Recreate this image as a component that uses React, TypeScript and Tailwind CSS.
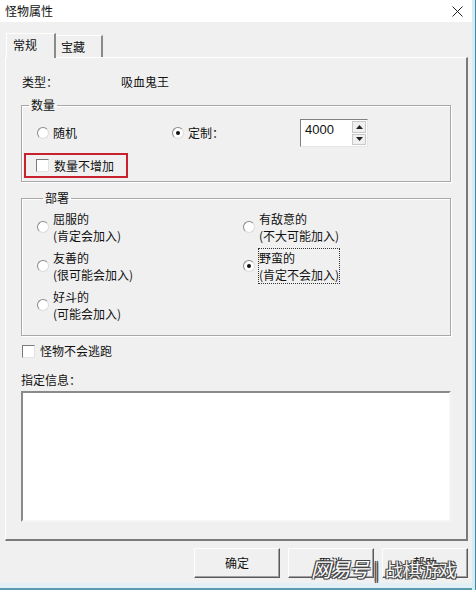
import React from 'react';

const Radio: React.FC<{ checked?: boolean }> = ({ checked }) => (
    <span className="w-[12px] h-[12px] shrink-0 rounded-full bg-white border border-t-[#8a8a8a] border-l-[#8a8a8a] border-r-[#dcdcdc] border-b-[#dcdcdc] flex items-center justify-center">
        {checked && <span className="w-[4px] h-[4px] rounded-full bg-[#111]" />}
    </span>
);

const Check: React.FC = () => (
    <span className="w-[13px] h-[13px] shrink-0 bg-white border border-t-[#7a7a7a] border-l-[#7a7a7a] border-r-[#e3e3e3] border-b-[#e3e3e3]" />
);

const Option: React.FC<{ title: string; sub: string; checked?: boolean; focus?: boolean }> = ({ title, sub, checked, focus }) => (
    <div className="flex items-center gap-[3px] h-[36px]">
        <Radio checked={checked} />
        <div className={`leading-[17px] border ${focus ? 'border-dotted border-[#333]' : 'border-transparent'}`}>
            <div>{title}</div>
            <div>{sub}</div>
        </div>
    </div>
);

const Button: React.FC<{ label: string }> = ({ label }) => (
    <button className="w-[86px] h-[30px] bg-[#f0f0f0] border border-t-[#fdfdfd] border-l-[#fdfdfd] border-r-[#5a5a5a] border-b-[#5a5a5a] shadow-[inset_-1px_-1px_0_#a0a0a0] text-[12px] text-[#111]">
        {label}
    </button>
);

const App: React.FC = () => {
    return (
        <div className="relative w-[476px] h-[590px] flex bg-[#f0f0f0] overflow-hidden font-['Noto_Sans_CJK_SC','Liberation_Sans',sans-serif] text-[12px] text-[#111]">
            <div className="w-[472px] h-full flex flex-col">
                {/* title bar */}
                <div className="h-[22px] bg-white flex items-center justify-between pl-[5px] pr-[9px]">
                    <span className="text-[12px]">怪物属性</span>
                    <svg width="11" height="11" viewBox="0 0 11 11">
                        <path d="M0.5 0.5 L10.5 10.5 M10.5 0.5 L0.5 10.5" stroke="#222" strokeWidth="1" />
                    </svg>
                </div>

                <div className="flex-1 flex flex-col">
                    {/* tabs */}
                    <div className="mt-[10px] ml-[6px] flex items-end h-[25px]">
                        <div className="relative z-10 h-[25px] -mb-[1px] w-[50px] bg-[#f0f0f0] border-t border-l border-t-white border-l-white border-r-2 border-r-[#8a8a8a] pl-[6px] pt-[2px]">
                            常规
                        </div>
                        <div className="h-[22px] w-[47px] border-t border-t-white border-r-2 border-r-[#8a8a8a] pl-[5px] pt-[2px]">
                            宝藏
                        </div>
                    </div>

                    {/* panel */}
                    <div className="ml-[5px] w-[463px] border-t border-l border-t-white border-l-white border-r-2 border-b-2 border-r-[#7a7a7a] border-b-[#7a7a7a] pl-[15px] pr-[15px] pt-[16px] pb-[17px]">
                        <div className="flex h-[16px] leading-[16px]">
                            <span className="ml-[1px] w-[99px]">类型：</span>
                            <span>吸血鬼王</span>
                        </div>

                        <fieldset className="mt-[7px] border border-[#a8a8a8] shadow-[inset_1px_1px_0_#fff,1px_1px_0_#fff] pb-[3px] pl-[1px]">
                            <legend className="ml-[6px] px-[2px] leading-[16px]">数量</legend>
                            <div className="mt-[6px] flex items-center h-[28px] pl-[14px]">
                                <div className="w-[135px] flex items-center gap-[4px]">
                                    <Radio />
                                    <span>随机</span>
                                </div>
                                <div className="w-[128px] flex items-center gap-[4px]">
                                    <Radio checked />
                                    <span>定制：</span>
                                </div>
                                <div className="flex h-[28px] w-[68px] bg-white border border-t-[#808080] border-l-[#808080] border-r-[#e6e6e6] border-b-[#e6e6e6]">
                                    <div className="flex-1 pl-[4px] pt-[2px] text-[13px] font-['Liberation_Sans',sans-serif] leading-[16px]">4000</div>
                                    <div className="w-[15px] flex flex-col gap-[1px] py-[1px] pr-[1px]">
                                        <div className="flex-1 bg-[#f0f0f0] border border-[#c8c8c8] flex items-center justify-center">
                                            <svg width="7" height="4" viewBox="0 0 7 4"><path d="M0 4 L3.5 0 L7 4 Z" fill="#222" /></svg>
                                        </div>
                                        <div className="flex-1 bg-[#f0f0f0] border border-[#c8c8c8] flex items-center justify-center">
                                            <svg width="7" height="4" viewBox="0 0 7 4"><path d="M0 0 L3.5 4 L7 0 Z" fill="#222" /></svg>
                                        </div>
                                    </div>
                                </div>
                            </div>
                            <div className="mt-[6px] ml-[1px] w-[104px] h-[25px] border-2 border-[#c8202e] flex items-center gap-[5px] pl-[10px]">
                                <Check />
                                <span>数量不增加</span>
                            </div>
                        </fieldset>

                        <fieldset className="mt-[8px] border border-[#a8a8a8] shadow-[inset_1px_1px_0_#fff,1px_1px_0_#fff] pt-[3px] pb-[12px] pl-[15px]">
                            <legend className="ml-[6px] px-[2px] leading-[16px]">部署</legend>
                            <div className="flex">
                                <div className="w-[206px] flex flex-col gap-[3px]">
                                    <Option title="屈服的" sub="(肯定会加入)" />
                                    <Option title="友善的" sub="(很可能会加入)" />
                                    <Option title="好斗的" sub="(可能会加入)" />
                                </div>
                                <div className="flex flex-col gap-[3px]">
                                    <Option title="有敌意的" sub="(不大可能加入)" />
                                    <Option title="野蛮的" sub="(肯定不会加入)" checked focus />
                                </div>
                            </div>
                        </fieldset>

                        <div className="mt-[7px] ml-[1px] flex items-center gap-[5px] h-[16px]">
                            <Check />
                            <span>怪物不会逃跑</span>
                        </div>

                        <div className="mt-[13px] h-[16px] leading-[16px]">指定信息：</div>

                        <div className="mt-[3px] h-[131px] w-[430px] bg-white border-2 border-t-[#8a8a8a] border-l-[#8a8a8a] border-r-[#f5f5f5] border-b-[#f5f5f5]" />
                    </div>

                    {/* buttons */}
                    <div className="mt-[7px] flex justify-end gap-[8px] pr-[4px]">
                        <Button label="确定" />
                        <Button label="取消" />
                        <Button label="帮助" />
                    </div>

                    <div className="mt-auto h-[7px] border-b-2 border-b-[#5b9bb0] bg-[#e3f1f7]" />
                </div>
            </div>
            <div className="w-[4px] h-full bg-[#d6ecf5] border-r border-r-[#3e8aa0]" />

            {/* watermark overlay */}
            <div className="absolute left-[311px] top-[557px] flex items-center gap-[6px] text-[20px] leading-[24px] text-white [text-shadow:-1px_-1px_0_#444,1px_-1px_0_#444,-1px_1px_0_#444,1px_1px_0_#444]">
                <span className="italic tracking-[-1px]">网易号</span>
                <span className="text-[#aaa] text-[18px]">|</span>
                <span className="text-[18px] text-[#f4f4f4]">战棋游戏</span>
            </div>
        </div>
    );
};

export default App;
